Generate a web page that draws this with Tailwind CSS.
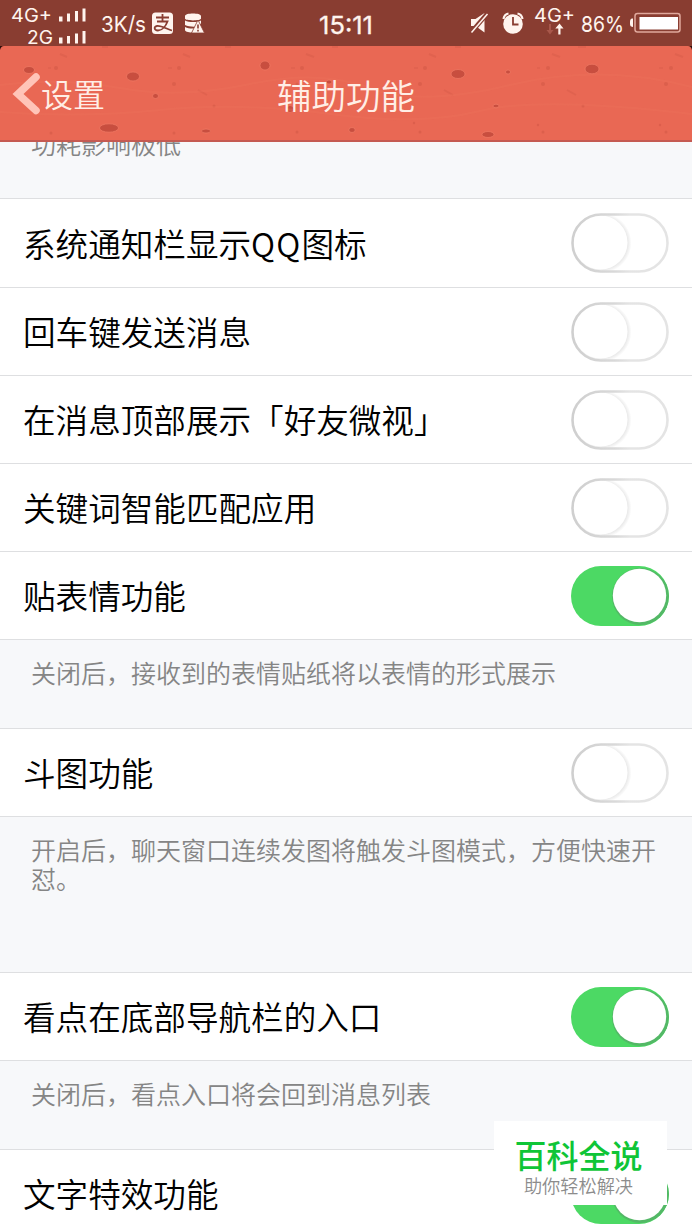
<!DOCTYPE html>
<html lang="zh-CN">
<head>
<meta charset="utf-8">
<title>辅助功能</title>
<script src="https://cdn.jsdelivr.net/npm/@tailwindcss/browser@4"></script>
</head>
<body class="w-[692px] h-[1230px] overflow-hidden bg-[#f7f8fa] font-['Noto_Sans_CJK_SC',sans-serif] font-[350] text-black">
<!-- Shared switch shapes -->
<svg class="absolute" width="0" height="0">
  <defs>
    <linearGradient id="rim"><stop offset="0" stop-color="#cfcfcf"/><stop offset=".45" stop-color="#d9d9d9"/><stop offset=".6" stop-color="#e4e4e4"/></linearGradient>
    <radialGradient id="soft"><stop offset=".88" stop-color="#ebebeb"/><stop offset="1" stop-color="#ffffff"/></radialGradient>
    <clipPath id="pill"><rect width="98" height="60" rx="30"/></clipPath>
  </defs>
  <symbol id="off" viewBox="0 0 98 60">
    <g clip-path="url(#pill)"><rect width="98" height="60" fill="#fff"/><circle cx="30.500" cy="30" r="30" fill="url(#soft)"/></g>
    <circle cx="29.500" cy="29.500" r="27" fill="#fff"/>
    <rect x="1.500" y="1.500" width="95" height="57" rx="28.500" fill="none" stroke="url(#rim)" stroke-width="2.600"/>
  </symbol>
  <symbol id="on" viewBox="0 0 98 60">
    <g clip-path="url(#pill)"><rect width="98" height="60" fill="#4cd964"/><circle cx="69.500" cy="30.500" r="28.500" fill="#53b866"/></g>
    <circle cx="68.500" cy="29.500" r="26.700" fill="#fff"/>
  </symbol>
</svg>
<div class="relative w-[692px] h-[1230px] overflow-hidden flex flex-col">

  <!-- Status bar -->
  <header class="h-[46px] shrink-0 bg-[#893d31] text-[#fff4ee] font-[Inter,'Noto_Sans_CJK_SC',sans-serif] font-normal">
    <svg class="block" width="692" height="46" viewBox="0 0 692 46" fill="#fff4ee">
      <text x="11" y="21.500" font-size="18.500" textLength="41" lengthAdjust="spacingAndGlyphs">4G+</text>
      <text x="27" y="43.500" font-size="18.500" textLength="26" lengthAdjust="spacingAndGlyphs">2G</text>
      <path d="M59 16.500h3.500v5H59zM67 13.500h3v8h-3zM75 11h3v10.500h-3zM82.500 8.500h3v13h-3zM59 37.500h3.500v6H59zM67 36h3v7.500h-3zM75 33.500h3v10h-3zM82.500 31h3v12.500h-3z"/>
      <text x="101" y="32" font-size="22" textLength="45" lengthAdjust="spacingAndGlyphs">3K/s</text>
      <rect x="152" y="12.500" width="21" height="21.500" rx="3.500"/>
      <path d="M156 17.500h13M162.500 14v7.500M157 21.500h10.500c-1.500 4-5 9-9.500 9-4 0-4.500-4-1-4.500 4-.5 9 2.500 15 4.500" fill="none" stroke="#893d31" stroke-width="1.800"/>
      <path d="M185 16c0-3.300 16-3.300 16 0v2.500c0 2.500-16 2.500-16 0zM185 20.500c4 2 12 2 16 0v3l-4 3c-4 .5-9 0-12-1.500zM185 27c3 1.500 7 1.700 10 1.300l-3 4.200c-4 0-7-1-7-2.500z"/>
      <path d="M198 20 204.500 33H191.500z" stroke="#893d31" stroke-width=".8"/>
      <path d="M198 24.500v4M198 29.800v1.700" stroke="#893d31" stroke-width="1.600"/>
      <text x="319" y="33.500" font-size="24.500" textLength="54" lengthAdjust="spacingAndGlyphs" stroke="#fff4ee" stroke-width=".3">15:11</text>
      <path d="M471 19h4.500l9-6v19.500l-9-6.500H471z"/>
      <path d="M471 32.500 487 14" stroke="#893d31" stroke-width="4.500"/>
      <path d="M471.500 32.500 487.500 14" stroke="#fff4ee" stroke-width="1.500"/>
      <circle cx="513" cy="24" r="9.800"/>
      <path d="M503.500 19c.5-3.500 2-5 5-5.500M517.500 13.500c3 .5 4.500 2 5 5.500" fill="none" stroke="#fff4ee" stroke-width="2.200"/>
      <path d="M513 17v7.500h5.500" fill="none" stroke="#893d31" stroke-width="1.800"/>
      <text x="534" y="21.500" font-size="18.500" textLength="41" lengthAdjust="spacingAndGlyphs">4G+</text>
      <path d="M549 24h2v6h2.500l-3.500 4.500-3.500-4.500h2.500z" fill="#a8574a"/>
      <path d="M559.500 23.500 563.500 28.500h-3v6h-2.200v-6h-3z"/>
      <text x="581" y="32" font-size="22" textLength="43" lengthAdjust="spacingAndGlyphs">86%</text>
      <rect x="635" y="13.500" width="45" height="18.500" rx="2.500" fill="none" stroke="#e0a89c" stroke-width="1.500"/>
      <rect x="639.500" y="17" width="38.500" height="12.500" fill="#fff"/>
      <path d="M633 18.500v8.500c-3 0-3-2-3-4.200s0-4.300 3-4.300z"/>
    </svg>
  </header>

  <!-- Title bar -->
  <nav class="relative h-[96px] shrink-0 bg-[#e96854] border-b-2 border-[#c55a52] overflow-hidden">
    <svg class="absolute inset-0" width="692" height="96" viewBox="0 46 692 96">
      <path d="M0 46h4q-3 0-4 4zM692 46h-4q3 0 4 4z" fill="#30100c"/>
      <g fill="#c84e3f" stroke="#f17b65" stroke-width=".7">
        <ellipse cx="29" cy="70" rx="5.500" ry="3.500"/>
        <ellipse cx="133" cy="76.500" rx="6.500" ry="4.500"/>
        <ellipse cx="155.500" cy="96" rx="3" ry="2.500"/>
        <ellipse cx="109" cy="128" rx="9.500" ry="4.200"/>
        <ellipse cx="206" cy="131" rx="4.500" ry="2"/>
        <ellipse cx="265" cy="65.500" rx="5" ry="4.500"/>
        <ellipse cx="329" cy="82" rx="3" ry="2"/>
        <ellipse cx="290" cy="109" rx="4" ry="3.500"/>
        <ellipse cx="352" cy="130" rx="3.200" ry="2.500"/>
        <ellipse cx="458" cy="74" rx="7" ry="4.500"/>
        <ellipse cx="508" cy="72" rx="2.500" ry="2"/>
        <ellipse cx="592" cy="69" rx="7" ry="4.800"/>
        <ellipse cx="496" cy="106" rx="3" ry="1.800"/>
        <ellipse cx="488" cy="134.500" rx="6" ry="3"/>
      </g>
      <g fill="#dc5f4c">
        <circle cx="56" cy="68" r="2"/><circle cx="179" cy="68" r="2"/><circle cx="174" cy="84" r="2"/><circle cx="302" cy="68" r="2"/><circle cx="297" cy="84" r="1.500"/>
        <circle cx="425" cy="68" r="2"/><circle cx="420" cy="84" r="2"/><circle cx="548" cy="68" r="2"/><circle cx="543" cy="84" r="2"/><circle cx="671" cy="68" r="2"/><circle cx="666" cy="84" r="2"/>
        <circle cx="51" cy="133" r="1.500"/><circle cx="174" cy="133" r="1.500"/><circle cx="297" cy="132" r="1.500"/><circle cx="420" cy="132" r="1.500"/><circle cx="543" cy="132" r="1.500"/><circle cx="666" cy="132" r="1.500"/>
        <circle cx="214" cy="106" r="1.500"/><circle cx="583" cy="106" r="1.500"/><circle cx="414" cy="123" r="1.200"/><circle cx="538" cy="125" r="1.200"/><circle cx="660" cy="125" r="1.200"/>
      </g>
      <g fill="none" stroke="#e0624f" stroke-width="2">
        <path d="M60 54l7 3M183 54l7 3M306 54l8 3M429 54l7 3M552 54l8 3M675 54l8 3"/>
        <path d="M75 90l9 5M198 90l9 5M444 90l9 5M567 90l9 5M102 47h6M225 47h6M332 47h6M455 47h6M578 47h8"/>
        <path d="M48 68h3M168 68h4M291 68h4M414 68h4M537 68h3M659 68h4" stroke-width="1.500"/>
      </g>
      <g fill="none" stroke="#ee735d" stroke-width="2" opacity=".3">
        <path d="M0 85q60-8 120 3t130-4 120 4 140-3 182 2M0 112q80 6 160-2t170 4 150-3 212 3"/>
      </g>
      <path d="M36 77 18 94l18 16.500" fill="none" stroke="#ffc4b8" stroke-width="7.500" stroke-linecap="round"/>
    </svg>
    <div class="relative grid grid-cols-3 items-center h-full text-[#ffeee6]">
      <span class="pl-[41px] text-[32px] leading-[48px]">设置</span>
      <h1 class="text-center pt-[2px] text-[34.500px] leading-[48px] font-[350] whitespace-nowrap">辅助功能</h1>
    </div>
  </nav>

  <!-- Settings list -->
  <main class="flex flex-col text-[32.600px]">
    <p class="h-[56px] overflow-hidden pl-[31px] text-[25px] leading-[28px] text-[#858585]"><span class="block -mt-[13px]">功耗影响极低</span></p>

    <section class="bg-white border-y border-[#dedfe1] divide-y divide-[#dedfe1]">
      <div class="h-[89px] px-[23px] flex items-center justify-between"><span class="whitespace-nowrap">系统通知栏显示<span class="tracking-[1.2px]">QQ</span>图标</span>
        <svg class="shrink-0 -mt-px" width="98" height="60"><use href="#off"/></svg></div>
      <div class="h-[88px] px-[23px] flex items-center justify-between"><span class="whitespace-nowrap">回车键发送消息</span>
        <svg class="shrink-0" width="98" height="60"><use href="#off"/></svg></div>
      <div class="h-[88px] px-[23px] flex items-center justify-between"><span class="whitespace-nowrap">在消息顶部展示「好友微视」</span>
        <svg class="shrink-0" width="98" height="60"><use href="#off"/></svg></div>
      <div class="h-[88px] px-[23px] flex items-center justify-between"><span class="whitespace-nowrap">关键词智能匹配应用</span>
        <svg class="shrink-0" width="98" height="60"><use href="#off"/></svg></div>
      <div class="h-[87px] px-[23px] flex items-center justify-between"><span class="whitespace-nowrap">贴表情功能</span>
        <svg class="shrink-0" width="98" height="60"><use href="#on"/></svg></div>
    </section>

    <p class="h-[88px] pt-[18px] pl-[31px] text-[25px] leading-[28px] text-[#858585] whitespace-nowrap">关闭后，接收到的表情贴纸将以表情的形式展示</p>

    <section class="h-[89px] bg-white border-y border-[#dedfe1] px-[23px] flex items-center justify-between"><span>斗图功能</span>
      <svg class="shrink-0" width="98" height="60"><use href="#off"/></svg></section>

    <p class="h-[155px] pt-[18px] pl-[31px] text-[25px] leading-[28.500px] text-[#858585] whitespace-nowrap">开启后，聊天窗口连续发图将触发斗图模式，方便快速开<br>怼。</p>

    <section class="h-[89px] bg-white border-y border-[#dedfe1] px-[23px] flex items-center justify-between"><span>看点在底部导航栏的入口</span>
      <svg class="shrink-0" width="98" height="60"><use href="#on"/></svg></section>

    <p class="h-[88px] pt-[18px] pl-[31px] text-[25px] leading-[28px] text-[#858585] whitespace-nowrap">关闭后，看点入口将会回到消息列表</p>

    <section class="h-[89px] bg-white border-y border-[#dedfe1] px-[23px] flex items-center justify-between"><span>文字特效功能</span>
      <svg class="shrink-0" width="98" height="60"><use href="#on"/></svg></section>
  </main>

  <!-- Watermark badge -->
  <div class="absolute left-[494px] top-[1121px] w-[173px] h-[84px] bg-white flex flex-col items-center pt-[14px] pr-[4px]">
    <div class="text-[32px] leading-[38px] font-medium text-[#0fc537]">百科全说</div>
    <div class="text-[18.200px] leading-[24px] text-[#8c8c8c]">助你轻松解决</div>
  </div>
</div>
</body>
</html>
